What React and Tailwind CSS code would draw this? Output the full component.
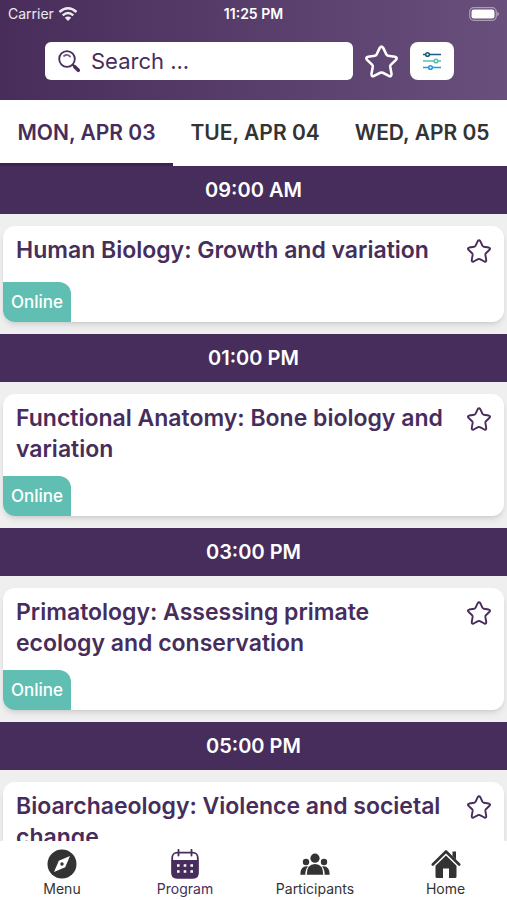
import { useState } from "react";

const DAYS = ["MON, APR 03", "TUE, APR 04", "WED, APR 05"];

const SESSIONS = [
  {
    time: "09:00 AM",
    title: "Human Biology: Growth and variation",
    online: true,
  },
  {
    time: "01:00 PM",
    title: "Functional Anatomy: Bone biology and variation",
    online: true,
  },
  {
    time: "03:00 PM",
    title: "Primatology: Assessing primate ecology and conservation",
    online: true,
  },
  {
    time: "05:00 PM",
    title: "Bioarchaeology: Violence and societal change",
  },
];

function StarIcon({ className }) {
  return (
    <svg
      viewBox="0 0 32 32"
      fill="none"
      stroke="currentColor"
      strokeWidth="2.5"
      strokeLinejoin="round"
      className={className}
      aria-hidden="true"
    >
      <path d="M14.3 2.8Q16 0.4 17.7 2.8L20.6 9Q21.1 10.2 22.4 10.4L29 11.4Q31.8 12.2 30 14.4L25.2 19Q24.3 20 24.5 21.3L25.7 28Q25.8 31 23.2 30L17.2 26.9Q16 26.3 14.8 26.9L8.8 30Q6.2 31 6.3 28L7.5 21.3Q7.7 20 6.8 19L2 14.4Q0.2 12.2 3 11.4L9.6 10.4Q10.900 10.2 11.4 9Z" />
    </svg>
  );
}

function SearchIcon() {
  return (
    <svg viewBox="0 0 24 24" fill="none" className="size-6 shrink-0" aria-hidden="true">
      <circle cx="10" cy="10" r="7.8" stroke="#472d5b" strokeWidth="1.8" />
      <path d="M7 7Q10 4.600 13 7.500" stroke="#6f5b80" strokeWidth="1.8" strokeLinecap="round" />
      <path d="M15.5 15.5L17.5 17.5" stroke="#472d5b" strokeWidth="2" />
      <path d="M17.7 17.7L21.3 21.3" stroke="#472d5b" strokeWidth="3.6" strokeLinecap="round" />
    </svg>
  );
}

function FilterIcon() {
  return (
    <svg viewBox="0 0 20 20" fill="none" strokeWidth="1.6" className="size-5" aria-hidden="true">
      <g stroke="#1f5a80">
        <path d="M1 3.5H3.5M7.5 3.5H19" />
        <circle cx="5.5" cy="3.5" r="1.8" />
      </g>
      <g stroke="#5cc0a8">
        <path d="M1 10H12M16 10H19" />
        <circle cx="14" cy="10" r="1.8" />
      </g>
      <g stroke="#2a97e0">
        <path d="M1 16.5H6.5M10.5 16.5H19" />
        <circle cx="8.5" cy="16.5" r="1.8" />
      </g>
    </svg>
  );
}

function CompassIcon() {
  return (
    <svg viewBox="0 0 30 30" className="size-full" aria-hidden="true">
      <circle cx="15" cy="15" r="14.5" fill="currentColor" />
      <path d="M23 7L18.2 18.2L7 23L11.8 11.8Z" fill="#fff" />
      <circle cx="15" cy="15" r="1.7" fill="currentColor" />
    </svg>
  );
}

function CalendarIcon() {
  return (
    <svg viewBox="0 0 30 30" className="size-full" aria-hidden="true">
      <rect x="2.2" y="3.7" width="25.6" height="25" rx="5" fill="none" stroke="currentColor" strokeWidth="1.8" />
      <path d="M1.5 11H28.5V24.5Q28.5 29.6 23.5 29.6H6.5Q1.5 29.6 1.5 24.5Z" fill="currentColor" />
      <path d="M8.5 0.8V6.5M21.5 0.8V6.5" stroke="currentColor" strokeWidth="1.8" strokeLinecap="round" />
      <path
        d="M7 16.5h2.6M13.7 16.5h2.6M20.4 16.5h2.6M7 22.5h2.6M13.7 22.5h2.6M20.4 22.5h2.6"
        stroke="#fff"
        strokeWidth="2.6"
      />
    </svg>
  );
}

function PeopleIcon() {
  return (
    <svg viewBox="0 0 30 30" fill="currentColor" className="size-full" aria-hidden="true">
      <circle cx="15" cy="9.2" r="4.6" />
      <circle cx="6" cy="13" r="3.2" />
      <circle cx="24" cy="13" r="3.2" />
      <path d="M6.8 25.8Q6.8 15 15 15T23.2 25.8Z" />
      <path d="M0.3 25.8Q0.3 17.3 6.500 17.300Q7.5 17.3 8 17.6Q5.3 20.5 5.3 25.8Z" />
      <path d="M29.7 25.8Q29.7 17.3 23.5 17.3Q22.5 17.3 22 17.6Q24.7 20.5 24.7 25.8Z" />
    </svg>
  );
}

function HomeIcon() {
  return (
    <svg viewBox="0 0 30 30" fill="currentColor" className="size-full" aria-hidden="true">
      <path
        d="M1.8 15.5L15 2.5L28.2 15.5"
        fill="none"
        stroke="currentColor"
        strokeWidth="2.6"
        strokeLinecap="round"
        strokeLinejoin="round"
      />
      <path d="M21.5 2.5H25V10.5L21.5 7Z" />
      <path d="M15 6.5L25.5 16.8V27.5Q25.5 29 24 29H18V19.5H12V29H6Q4.5 29 4.5 27.5V16.8Z" />
    </svg>
  );
}

const NAV_ITEMS = [
  { label: "Menu", Icon: CompassIcon },
  { label: "Program", Icon: CalendarIcon, active: true },
  { label: "Participants", Icon: PeopleIcon },
  { label: "Home", Icon: HomeIcon },
];

function StatusBar() {
  return (
    <div className="grid grid-cols-3 items-center h-7 px-2 text-sm text-white/90">
      <div className="flex items-center gap-1">
        Carrier
        <svg
          viewBox="0 0 20 15"
          fill="none"
          stroke="currentColor"
          strokeWidth="2.4"
          className="w-5 h-4"
          aria-hidden="true"
        >
          <path d="M1.5 5.5Q10 -2.2 18.5 5.5" />
          <path d="M4.7 8.9Q10 4 15.3 8.9" />
          <path d="M10 14.5L6.8 11.3Q10 8.6 13.2 11.3Z" fill="currentColor" stroke="none" />
        </svg>
      </div>
      <span className="text-center font-semibold text-white">11:25 PM</span>
      <svg viewBox="0 0 30 14" className="w-[30px] h-[14px] justify-self-end" aria-hidden="true">
        <rect x="0.7" y="0.7" width="26.6" height="12.6" rx="4" fill="none" stroke="#fff" strokeOpacity="0.45" strokeWidth="1.2" />
        <rect x="2.5" y="2.5" width="23" height="9" rx="2.2" fill="#fff" />
        <path d="M28.3 4.8Q30 5.5 30 7T28.3 9.2Z" fill="#fff" fillOpacity="0.5" />
      </svg>
    </div>
  );
}

function SessionCard({ title, online }) {
  return (
    <article className="flex flex-col justify-between min-h-24 mx-[3px] my-3 bg-white rounded-xl shadow-md overflow-hidden">
      <div className="flex items-start justify-between gap-3 pt-[9px] px-[13px] pb-[11px]">
        <h3 className="text-[23px] leading-[31px] font-semibold">{title}</h3>
        <button type="button" aria-label="Add to favourites" className="shrink-0 pt-1">
          <StarIcon className="size-6" />
        </button>
      </div>
      {online && (
        <span className="self-start px-2 h-10 leading-10 bg-[#60bfb2] rounded-tr-xl text-[17px] font-medium text-white">
          Online
        </span>
      )}
    </article>
  );
}

function App() {
  const [day, setDay] = useState(0);

  return (
    <div className="flex flex-col h-screen overflow-hidden bg-[#efefef] font-['Inter',sans-serif] text-[#472d5b]">
      <header className="shrink-0 bg-linear-to-r from-[#482d5b] to-[#694f7c]">
        <StatusBar />
        <div className="flex items-center gap-3 pt-[14px] pb-5 pl-[45px] pr-[53px]">
          <label className="flex flex-1 items-center gap-[10px] min-w-0 h-[38px] px-3 bg-white rounded-md">
            <SearchIcon />
            <input
              type="text"
              placeholder="Search ..."
              aria-label="Search"
              className="flex-1 min-w-0 text-[22px] outline-none placeholder:text-[#472d5b]"
            />
          </label>
          <button type="button" aria-label="Favourites" className="text-white">
            <StarIcon className="size-[33px]" />
          </button>
          <button
            type="button"
            aria-label="Filters"
            className="flex items-center justify-center w-11 h-[38px] bg-white rounded-lg"
          >
            <FilterIcon />
          </button>
        </div>
      </header>

      <div className="flex shrink-0 bg-white">
        {DAYS.map((label, i) => (
          <button
            key={label}
            type="button"
            onClick={() => setDay(i)}
            className={`flex-auto h-[66px] pt-[2px] text-[21px] font-semibold whitespace-nowrap border-b-3 ${
              day === i
                ? "border-[#3b2352]"
                : "border-transparent text-[#333]"
            }`}
          >
            {label}
          </button>
        ))}
      </div>

      <main className="flex-1 min-h-0 overflow-hidden">
        {SESSIONS.map(({ time, title, online }) => (
          <section key={time}>
            <h2 className="h-12 leading-12 bg-[#472d5b] text-center text-xl font-semibold text-white">
              {time}
            </h2>
            <SessionCard title={title} online={online} />
          </section>
        ))}
      </main>

      <nav className="grid grid-cols-[124fr_122fr_138fr_123fr] shrink-0 h-[59px] bg-white">
        {NAV_ITEMS.map(({ label, Icon, active }) => (
          <a
            key={label}
            href="#"
            className={`flex flex-col items-center pt-2 text-sm leading-5 ${
              active ? "text-[#472d5b]" : "text-[#333]"
            }`}
          >
            <span className="size-[30px]">
              <Icon />
            </span>
            {label}
          </a>
        ))}
      </nav>
    </div>
  );
}

export default App;
